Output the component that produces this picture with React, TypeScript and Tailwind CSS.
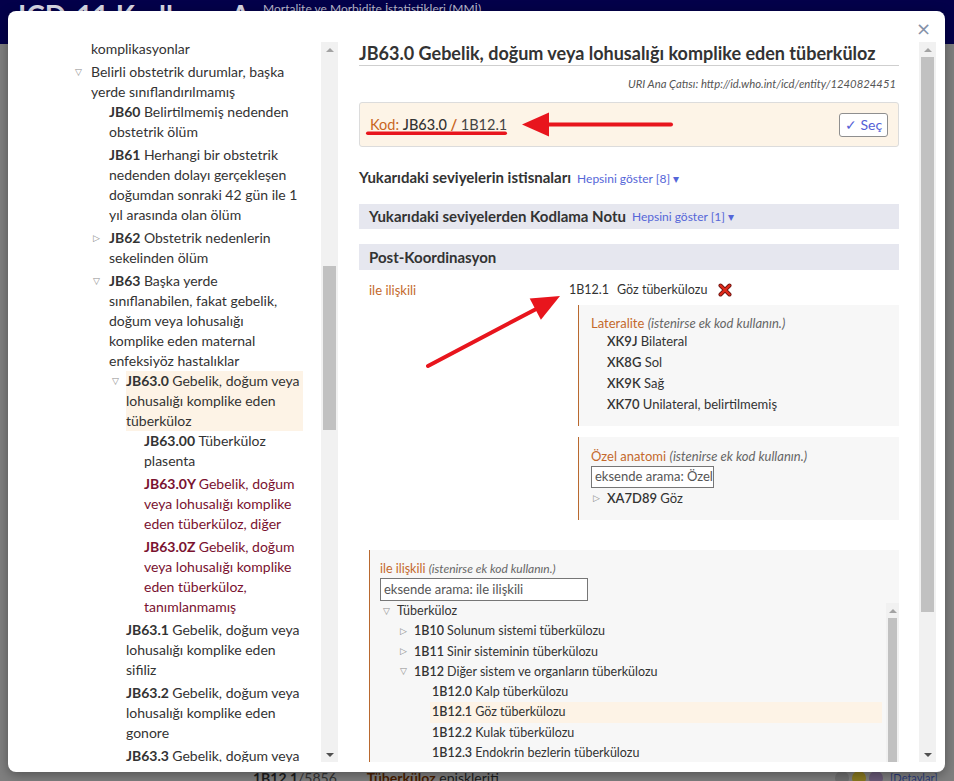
import type { ReactNode } from 'react';

type Row = {
  lvl: 1 | 2 | 3 | 4;
  tri?: 'open' | 'closed';
  code?: string;
  lines: string[];
  gap?: boolean;
  hl?: boolean;
  red?: boolean;
};

const leftRows: Row[] = [
  { lvl: 1, lines: ['komplikasyonlar'] },
  { lvl: 1, tri: 'open', gap: true, lines: ['Belirli obstetrik durumlar, başka', 'yerde sınıflandırılmamış'] },
  { lvl: 2, code: 'JB60', lines: ['Belirtilmemiş nedenden', 'obstetrik ölüm'] },
  {
    lvl: 2,
    code: 'JB61',
    gap: true,
    lines: ['Herhangi bir obstetrik', 'nedenden dolayı gerçekleşen', 'doğumdan sonraki 42 gün ile 1', 'yıl arasında olan ölüm'],
  },
  { lvl: 2, tri: 'closed', code: 'JB62', gap: true, lines: ['Obstetrik nedenlerin', 'sekelinden ölüm'] },
  {
    lvl: 2,
    tri: 'open',
    code: 'JB63',
    gap: true,
    lines: ['Başka yerde', 'sınıflanabilen, fakat gebelik,', 'doğum veya lohusalığı', 'komplike eden maternal', 'enfeksiyöz hastalıklar'],
  },
  { lvl: 3, tri: 'open', code: 'JB63.0', hl: true, lines: ['Gebelik, doğum veya', 'lohusalığı komplike eden', 'tüberküloz'] },
  { lvl: 4, code: 'JB63.00', lines: ['Tüberküloz', 'plasenta'] },
  { lvl: 4, code: 'JB63.0Y', red: true, gap: true, lines: ['Gebelik, doğum', 'veya lohusalığı komplike', 'eden tüberküloz, diğer'] },
  {
    lvl: 4,
    code: 'JB63.0Z',
    red: true,
    gap: true,
    lines: ['Gebelik, doğum', 'veya lohusalığı komplike', 'eden tüberküloz,', 'tanımlanmamış'],
  },
  { lvl: 3, code: 'JB63.1', gap: true, lines: ['Gebelik, doğum veya', 'lohusalığı komplike eden', 'sifiliz'] },
  { lvl: 3, code: 'JB63.2', gap: true, lines: ['Gebelik, doğum veya', 'lohusalığı komplike eden', 'gonore'] },
  { lvl: 3, code: 'JB63.3', gap: true, lines: ['Gebelik, doğum veya', 'lohusalığı komplike eden', 'klamidya'] },
];

// triangle column start + width, so the text lands on 91 / 109 / 126 / 144
const indent: Record<number, { pad: string; tri: string }> = {
  1: { pad: 'pl-[35px]', tri: 'w-[16px]' },
  2: { pad: 'pl-[53px]', tri: 'w-[16px]' },
  3: { pad: 'pl-[72px]', tri: 'w-[14px]' },
  4: { pad: 'pl-[88px]', tri: 'w-[16px]' },
};

const Tri = ({ open }: { open?: boolean }) => (
  <span className="flex h-[20px] items-center text-[9px] leading-none text-[#8a8a8a] font-['DejaVu_Sans',sans-serif]">
    {open ? '▽' : '▷'}
  </span>
);

const Scrollbar = ({ thumb, className }: { thumb: string; className: string }) => (
  <div className={`flex flex-col bg-[#f1f1f1] ${className}`}>
    <div className="h-[15px] flex items-center justify-center shrink-0">
      <div className="w-0 h-0 border-l-[4px] border-r-[4px] border-b-[4px] border-l-transparent border-r-transparent border-b-[#a3a3a3]" />
    </div>
    <div className="flex-1 min-h-0 overflow-hidden px-[2px]">
      <div className={`bg-[#c1c1c1] ${thumb}`} />
    </div>
    <div className="h-[15px] flex items-center justify-center shrink-0">
      <div className="w-0 h-0 border-l-[4px] border-r-[4px] border-t-[4px] border-l-transparent border-r-transparent border-t-[#505050]" />
    </div>
  </div>
);

const LeftTree = () => (
  <div className="flex w-[298px] h-[720px]">
    <div className="flex-1 overflow-hidden">
      <div className="-mt-[3px] w-[263px] text-[14px] leading-[20px] text-[#333]">
        {leftRows.map((r, i) => (
          <div key={i} className={`flex ${indent[r.lvl].pad} ${r.gap ? 'mt-[3px]' : ''}`}>
            <span className={`shrink-0 ${indent[r.lvl].tri}`}>{r.tri && <Tri open={r.tri === 'open'} />}</span>
            <div className={`flex-1 ${r.hl ? 'bg-[#fdf3e6]' : ''} ${r.red ? 'text-[#7a1230]' : ''}`}>
              {r.lines.map((l, j) => (
                <div key={j} className="whitespace-nowrap">
                  {j === 0 && r.code && <span className="font-bold">{r.code} </span>}
                  {l}
                </div>
              ))}
            </div>
          </div>
        ))}
      </div>
    </div>
    <Scrollbar className="w-[17px]" thumb="mt-[209px] h-[164px]" />
  </div>
);

const RedX = () => (
  <svg width="14" height="14" viewBox="0 0 14 14" className="block">
    <path d="M2.5 2.5 L11.5 11.5 M11.5 2.5 L2.5 11.5" stroke="#6b1410" strokeWidth="4" strokeLinecap="round" />
    <path d="M2.5 2.5 L11.5 11.5 M11.5 2.5 L2.5 11.5" stroke="#e02a1a" strokeWidth="2.4" strokeLinecap="round" />
  </svg>
);

const Hint = ({ small }: { small?: boolean }) => (
  <span className={`italic text-[#666] ${small ? 'text-[12px]' : 'text-[13px]'}`}>(istenirse ek kod kullanın.)</span>
);

const Link = ({ children }: { children: ReactNode }) => (
  <span className="ml-[6px] text-[12px] font-normal text-[#5566d8]">{children}</span>
);

const innerTree: { pad: string; tri?: 'open' | 'closed'; code?: string; text: string; hl?: boolean }[] = [
  { pad: 'pl-[3px]', tri: 'open', text: 'Tüberküloz' },
  { pad: 'pl-[20px]', tri: 'closed', code: '1B10', text: 'Solunum sistemi tüberkülozu' },
  { pad: 'pl-[20px]', tri: 'closed', code: '1B11', text: 'Sinir sisteminin tüberkülozu' },
  { pad: 'pl-[20px]', tri: 'open', code: '1B12', text: 'Diğer sistem ve organların tüberkülozu' },
  { pad: 'pl-[52px]', code: '1B12.0', text: 'Kalp tüberkülozu' },
  { pad: 'pl-[52px]', code: '1B12.1', text: 'Göz tüberkülozu', hl: true },
  { pad: 'pl-[52px]', code: '1B12.2', text: 'Kulak tüberkülozu' },
  { pad: 'pl-[52px]', code: '1B12.3', text: 'Endokrin bezlerin tüberkülozu' },
  { pad: 'pl-[52px]', code: '1B12.4', text: 'Deri tüberkülozu' },
];

const RightPanel = () => (
  <div className="flex h-[720px] w-[598px]">
    <div className="flex-1 overflow-hidden pl-[21px] pr-[20px] text-[#333]">
      <h2 className="h-[24px] border-b border-[#cfcfcf] text-[18px] leading-[22px] font-bold text-[#333] whitespace-nowrap">
        JB63.0 Gebelik, doğum veya lohusalığı komplike eden tüberküloz
      </h2>
      <div className="mt-[10px] pr-[3px] text-right text-[11.3px] leading-[16px] italic text-[#555]">
        URI Ana Çatısı: http://id.who.int/icd/entity/1240824451
      </div>
      <div className="mt-[10px] flex h-[45px] items-center justify-between rounded-[3px] border border-[#dcdcdc] bg-[#fdf4e7] pl-[10px] pr-[10px]">
        <div className="text-[14.5px]">
          <span className="text-[#c9661e]">Kod: </span>
          <span className="text-[#333] font-medium">JB63.0</span>
          <span className="font-bold text-[#c9661e]"> / </span>
          <span className="text-[#444]">1B12.1</span>
        </div>
        <button className="h-[24px] w-[49px] rounded-[3px] border border-[#8f8f8f] bg-white text-[14px] leading-[20px] text-[#5560d6]">
          ✓ Seç
        </button>
      </div>
      <div className="mt-[20px] text-[15px] leading-[20px] font-bold">
        Yukarıdaki seviyelerin istisnaları
        <Link>Hepsini göster [8] ▾</Link>
      </div>
      <div className="mt-[15px] flex h-[25px] items-center bg-[#e6e7ef] px-[10px] text-[15px] font-bold">
        Yukarıdaki seviyelerden Kodlama Notu
        <Link>Hepsini göster [1] ▾</Link>
      </div>
      <div className="mt-[15px] flex h-[26px] items-center bg-[#e6e7ef] px-[10px] text-[15px] font-bold">Post-Koordinasyon</div>

      <div className="mt-[10px] flex text-[13px]">
        <div className="w-[210px] shrink-0 pl-[10px] leading-[20px] text-[#c4692c]">ile ilişkili</div>
        <div className="flex-1">
          <div className="flex h-[20px] items-center text-[12.5px]">
            <span className="text-[#333]">1B12.1</span>
            <span className="ml-[8px]">Göz tüberkülozu</span>
            <span className="ml-[11px]">
              <RedX />
            </span>
          </div>
          <div className="ml-[9px] mt-[5px] h-[121px] border-l border-[#b9692f] bg-[#f7f7f7] pl-[12px] pt-[10px]">
            <div className="leading-[16px]">
              <span className="text-[#c4692c]">Lateralite </span>
              <Hint />
            </div>
            <div className="pl-[16px] leading-[21px]">
              <div>
                <b className="font-semibold">XK9J</b> Bilateral
              </div>
              <div>
                <b className="font-semibold">XK8G</b> Sol
              </div>
              <div>
                <b className="font-semibold">XK9K</b> Sağ
              </div>
              <div>
                <b className="font-semibold">XK70</b> Unilateral, belirtilmemiş
              </div>
            </div>
          </div>
          <div className="ml-[9px] mt-[11px] h-[83px] border-l border-[#b9692f] bg-[#f7f7f7] pl-[12px] pt-[11px]">
            <div className="leading-[16px]">
              <span className="text-[#c4692c]">Özel anatomi </span>
              <Hint />
            </div>
            <div className="mt-[2px] flex h-[22px] w-[123px] items-center border border-[#767676] bg-white px-[3px] text-[13px] text-[#555] whitespace-nowrap overflow-hidden">
              eksende arama: Özel
            </div>
            <div className="flex leading-[20px]">
              <span className="w-[16px] pl-[2px]">
                <Tri />
              </span>
              <span>
                <b className="font-semibold">XA7D89</b> Göz
              </span>
            </div>
          </div>
        </div>
      </div>

      <div className="ml-[10px] mt-[30px] h-[260px] border-l border-[#b9692f] bg-[#f7f7f7] pl-[10px] pt-[11px] text-[12.5px]">
        <div className="leading-[16px]">
          <span className="text-[#c4692c]">ile ilişkili </span>
          <Hint small />
        </div>
        <div className="mt-[1px] flex h-[23px] w-[208px] items-center border border-[#767676] bg-white px-[3px] text-[13px] text-[#555]">
          eksende arama: ile ilişkili
        </div>
        <div className="flex">
          <div className="flex-1 pr-[4px] leading-[20.3px]">
            {innerTree.map((n, i) => (
              <div key={i} className={`flex ${n.pad}`}>
                {n.tri && (
                  <span className="w-[14px] shrink-0">
                    <Tri open={n.tri === 'open'} />
                  </span>
                )}
                <span className={`flex-1 whitespace-nowrap ${n.hl ? 'bg-[#fdf3e6] -ml-[2px] pl-[2px]' : ''}`}>
                  {n.code && <b className="font-semibold">{n.code} </b>}
                  {n.text}
                </span>
              </div>
            ))}
          </div>
          <Scrollbar className="mt-[2px] h-[200px] w-[13px]" thumb="mt-[0px] h-[180px]" />
        </div>
      </div>
    </div>
    <Scrollbar className="w-[17px]" thumb="mt-[0px] h-[555px]" />
  </div>
);

export default function App() {
  return (
    <div className="relative h-[781px] w-[954px] overflow-hidden bg-[#7f7f7f] font-['Lato','Liberation_Sans',sans-serif]">
      {/* page behind the overlay */}
      <div className="relative h-[44px] bg-[#03004a]">
        <div className="absolute left-[18px] top-[-2px] text-[28px] font-bold leading-[34px] text-[#d8d8e4] whitespace-nowrap">
          ICD-11 Kodlama Aracı
        </div>
        <div className="absolute left-[263px] top-[1px] text-[12px] leading-[16px] text-[#b9b9cc] whitespace-nowrap">
          Mortalite ve Morbidite İstatistikleri (MMİ)
        </div>
      </div>
      <div className="absolute left-[253px] top-[768px] flex items-center gap-[30px] text-[14px] leading-[20px] text-[#1c1c1c] whitespace-nowrap">
        <span className="font-bold">
          1B12.1<span className="font-normal text-[#333]">/5856</span>
        </span>
        <span>
          <b className="text-[#4a1e00]">Tüberküloz</b> episkleriti
        </span>
      </div>
      <div className="absolute left-[835px] top-[770px] flex items-center gap-[3px]">
        <span className="h-[14px] w-[14px] rounded-full bg-[#6f6f6f]" />
        <span className="h-[14px] w-[14px] rounded-full bg-[#8a7a20]" />
        <span className="h-[14px] w-[14px] rounded-full bg-[#6a5a78]" />
        <span className="ml-[4px] text-[11px] text-[#2a3a7a]">[Detaylar]</span>
      </div>

      {/* modal */}
      <div className="absolute left-[8px] top-[11px] h-[761px] w-[937px] rounded-[8px] bg-white shadow-[0_3px_12px_rgba(0,0,0,0.35)]">
        <button className="absolute right-[14px] top-[8px] text-[18px] leading-[20px] text-[#8591a8] font-['DejaVu_Sans',sans-serif]">
          ×
        </button>
        <div className="mt-[31px] ml-[32px] flex">
          <LeftTree />
          <RightPanel />
        </div>
      </div>

      {/* annotation arrows */}
      <svg className="pointer-events-none absolute left-0 top-0" width="954" height="781">
        <rect x="366" y="131.5" width="141" height="3.5" rx="1.75" fill="#e8151d" />
        <line x1="546" y1="124.5" x2="671" y2="124.5" stroke="#e8151d" strokeWidth="4" strokeLinecap="round" />
        <polygon points="522,124.5 549,112.5 549,136.5" fill="#e8151d" />
        <line x1="428" y1="366" x2="540" y2="307" stroke="#e8151d" strokeWidth="4" strokeLinecap="round" />
        <polygon points="560,296 529.7,298.5 540.9,319.7" fill="#e8151d" />
      </svg>
    </div>
  );
}
